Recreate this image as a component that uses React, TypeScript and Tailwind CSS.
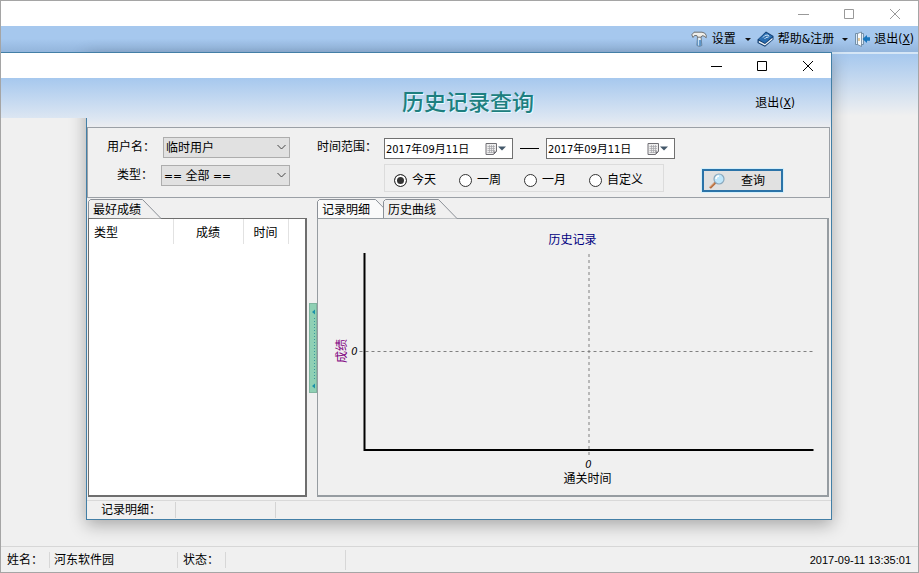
import { useState } from "react";
import type { ReactNode } from "react";

const ranges = ["今天", "一周", "一月", "自定义"];

const WindowButtons = ({ className }: { className: string }) => (
  <div className={`flex items-center ${className}`}>
    <button aria-label="最小化" className="flex h-6 w-[46px] items-center justify-center">
      <svg width="12" height="12" stroke="currentColor" fill="none">
        <path d="M1 6.5h11" />
      </svg>
    </button>
    <button aria-label="最大化" className="flex h-6 w-[46px] items-center justify-center">
      <svg width="12" height="12" stroke="currentColor" fill="none">
        <path d="M1.5 1.5h9v9h-9z" />
      </svg>
    </button>
    <button aria-label="关闭" className="flex h-6 w-[46px] items-center justify-center">
      <svg width="12" height="12" stroke="currentColor" fill="none">
        <path d="M1 1l10 10M11 1L1 11" />
      </svg>
    </button>
  </div>
);

const HammerIcon = () => (
  <svg width="16" height="16" viewBox="0 0 16 16">
    <path d="M6.500 5.500h3.500l.8 9q-2.500 1.500-4.800 0z" fill="#f1f3f4" stroke="#59646f" strokeWidth=".8" />
    <path d="M6.300 9h4l.4 5.500q-2.200 1-4.700 0z" fill="#5f97cb" />
    <path d="M7.600 6v8.500" stroke="#d5e9f8" />
    <path d="M.8 3.800L3 1.200h8q3.200.3 4.200 3v2.600q-2.200-2.600-4.200-2l-1 1.400H6.500L5.800 4.500H3.500L2 6.500z" fill="#f0efeb" stroke="#666" strokeWidth=".9" />
  </svg>
);

const BookIcon = () => (
  <svg width="17" height="16" viewBox="0 0 17 16">
    <path d="M.5 8.500L9 .5l7.500 4.500v3.500L8 15.800.5 12z" fill="#123f73" />
    <path d="M1.500 8.200L9 1.500l6.500 4L8 12z" fill="#2c6fb2" />
    <path d="M1.800 9.800L8 13l7.500-6.300v1.800L8 14.600l-6.200-3z" fill="#f3f7fa" />
    <path d="M6 6.500q1.500-3 5-2.500l1 1.500M7.500 8q1-2 4-2" fill="none" stroke="#d6e9f8" />
  </svg>
);

const DoorIcon = () => (
  <svg width="16" height="16" viewBox="0 0 16 16">
    <path d="M1.500 2.500h8v11h-8z" fill="#dceaf6" stroke="#7190ab" />
    <path d="M3.500 2.500l4-1.500v14.500l-4-2z" fill="#f6fafc" stroke="#6b8298" strokeWidth=".8" />
    <path d="M5 7v3" stroke="#d39a3a" />
    <path d="M8.500 8L13 4v2.300h3v3.400h-3V12z" fill="#1976bd" />
  </svg>
);

const SearchIcon = () => (
  <svg width="16" height="16" viewBox="0 0 16 16">
    <path d="M1 15L6.500 9.500" stroke="#b66d3d" strokeWidth="2.400" />
    <path d="M1 14.200l4.500-4.500" stroke="#e8b48f" strokeWidth=".8" />
    <circle cx="10" cy="6" r="5" fill="#bfe6fa" stroke="#8ba9be" strokeWidth="1.200" />
    <path d="M7 6q0-3 3-3" fill="none" stroke="#fff" strokeWidth="1.500" />
  </svg>
);

const CalendarIcon = () => (
  <svg width="22" height="14" viewBox="0 0 22 14">
    <path d="M1 1.500h10.500v8l-3 3H1z" fill="#eee" stroke="#706f74" />
    <path d="M2.500 4.500h7.500M2.500 6.500h7.500M2.500 8.500h7.500M2.500 10.500h5.500M4.500 3v8M6.500 3v8M8.500 3v7" stroke="#a4a4a8" strokeWidth=".7" />
    <path d="M8.500 12.500v-3h3z" fill="#706f74" />
    <path d="M13 4.500h8l-4 4z" fill="#44586a" />
  </svg>
);

const Caret = () => (
  <svg width="6" height="3" viewBox="0 0 6 3">
    <path d="M0 0h6L3 3z" fill="#111" />
  </svg>
);

const Picker = ({ id, label, options, className }: { id: string; label: string; options: string[]; className: string }) => (
  <div className="flex h-[21px] items-center justify-end">
    <label htmlFor={id} className="mr-2 pb-[2px]">
      {label}：
    </label>
    <div className={`relative ${className}`}>
      <select id={id} className="block h-[21px] w-full appearance-none border border-[#adadad] bg-[#e1e1e1] pt-px pl-[2px]">
        {options.map((option) => (
          <option key={option}>{option}</option>
        ))}
      </select>
      <svg className="pointer-events-none absolute top-[7px] right-1" width="9" height="7" fill="none" stroke="#444">
        <path d="M.5 1l4 4 4-4" />
      </svg>
    </div>
  </div>
);

const DateBox = ({ label }: { label: string }) => {
  const [value, setValue] = useState("2017年09月11日");

  return (
    <div className="flex h-[21px] w-[129px] items-center border border-[#707070] bg-white pr-[5px] pl-px">
      <input
        aria-label={label}
        className="min-w-0 flex-1 pt-[2px] text-[11px] outline-none"
        value={value}
        onChange={(e) => setValue(e.target.value)}
      />
      <button aria-label={`选择${label}`}>
        <CalendarIcon />
      </button>
    </div>
  );
};

const Tab = ({ children, width, active }: { children: ReactNode; width: number; active?: boolean }) => (
  <button role="tab" aria-selected={!!active} className="relative h-[19px] pt-[3px] pl-[5px] text-left" style={{ width }}>
    <svg className="absolute top-0 left-0 overflow-visible" width={width} height="19" stroke="#8b9097">
      <path d={`M.5 19V2.500l2-2h${width - 22}l18.500 19`} fill={active ? "#f0f0f0" : "#fafafa"} />
    </svg>
    <span className="relative">{children}</span>
  </button>
);

const HistoryChart = () => (
  <svg className="block h-full w-full" viewBox="0 0 508 276" fontSize="12">
    <text x="254" y="25" textAnchor="middle" fill="#000080">
      历史记录
    </text>
    <text transform="translate(27 132) rotate(-90)" textAnchor="middle" fill="#800080">
      成绩
    </text>
    <path d="M41 132.500h454" stroke="#808080" strokeDasharray="3 3" />
    <path d="M270.500 35v202" stroke="#808080" strokeDasharray="3 3" />
    <path d="M46 34v197h449" fill="none" stroke="#000" strokeWidth="2" />
    <g fontSize="11" fontStyle="italic">
      <text x="36" y="136" textAnchor="middle">
        0
      </text>
      <text x="270" y="249" textAnchor="middle">
        0
      </text>
    </g>
    <text x="269" y="264" textAnchor="middle">
      通关时间
    </text>
  </svg>
);

const FilterBar = () => {
  const [range, setRange] = useState("今天");

  return (
    <section className="mr-px flex h-[71px] border border-[#9ba0a6] pt-[9px]">
      <div className="flex w-[202px] flex-col gap-[7px]">
        <Picker id="user" label="用户名" options={["临时用户"]} className="w-[127px]" />
        <Picker id="kind" label="类型" options={["== 全部 =="]} className="w-[129px]" />
      </div>
      <div className="ml-[27px] flex">
        <div className="w-[67px] leading-[20px]">时间范围：</div>
        <div>
          <div className="flex items-center gap-[7px] pt-px">
            <DateBox label="开始日期" />
            <div className="h-px w-[19px] bg-black" />
            <DateBox label="结束日期" />
          </div>
          <div className="mt-[5px] flex h-[28px] w-[280px] items-center border border-[#dcdcdc] pl-[9px]">
            {ranges.map((item) => (
              <label key={item} className="flex w-[65px] shrink-0 items-center gap-[5px] pt-1">
                <input
                  type="radio"
                  name="range"
                  className="size-[13px] shrink-0 appearance-none rounded-full border border-[#333] bg-white checked:bg-[#333] checked:shadow-[inset_0_0_0_2px_white]"
                  checked={range === item}
                  onChange={() => setRange(item)}
                />
                <span className="whitespace-nowrap">{item}</span>
              </label>
            ))}
          </div>
        </div>
      </div>
      <button className="mt-8 mr-[46px] ml-auto flex h-[23px] w-[81px] items-center border-2 border-[#2b73a8] bg-[#e1e1e1] pl-[5px] outline outline-[#d3effb]">
        <SearchIcon />
        <span className="ml-4">查询</span>
      </button>
    </section>
  );
};

const HistoryWindow = () => (
  <div className="absolute -top-[2px] right-[86px] bottom-[26px] left-[85px] flex flex-col border border-[#437fa6] bg-[#f0f0f0] shadow-[0_5px_16px_rgba(0,0,0,0.3)]">
    {/* title bar and banner */}
    <div className="-mt-px -ml-[86px] border-t border-[#437fa6] bg-white">
      <WindowButtons className="h-[25px] justify-end text-black" />
    </div>
    <header className="-ml-[86px] flex h-10 items-center bg-linear-to-b from-[#a6c8ee] to-[#dce6f2] pr-9">
      <h1 className="ml-[401px] pt-[10px] text-[22px] leading-[24px] font-medium text-[#1d7f80] [text-shadow:1px_1px_0_#e6fbff]">
        历史记录查询
      </h1>
      <button className="ml-auto pt-[10px]">
        退出(<u>X</u>)
      </button>
    </header>
    <div className="h-[9px] shrink-0 bg-linear-to-b from-[#dce6f2] to-[#ecedf0]" />

    <FilterBar />

    {/* results */}
    <main className="flex min-h-0 flex-1 pt-px pl-px">
      <section className="flex w-[219px] flex-col">
        <Tab width={74} active>
          最好成绩
        </Tab>
        <div className="flex-1 border border-r-2 border-b-2 border-[#6e6e6e] bg-white">
          <table className="h-[25px] table-fixed border-collapse">
            <thead>
              <tr className="[&>th]:border-r [&>th]:border-[#e2e2e2] [&>th]:p-0 [&>th]:pt-[2px] [&>th]:font-normal">
                <th className="w-[84px] text-left">
                  <span className="pl-[5px]">类型</span>
                </th>
                <th className="w-[70px]">成绩</th>
                <th className="w-[45px]">时间</th>
              </tr>
            </thead>
          </table>
        </div>
      </section>
      <div className="flex w-[10px] items-center justify-end">
        <button aria-label="折叠" className="h-[90px] w-2 border border-[#7fb6a0] bg-[#8fd0b4]">
          <svg width="6" height="88" viewBox="0 0 6 88">
            <path d="M5 5.500v5L2 8zM5 79.500v5L2 82z" fill="#1c91a8" />
            <path d="M4.500 14v62" stroke="#39969b" strokeDasharray="1 2" />
          </svg>
        </button>
      </div>
      <section className="flex min-w-0 flex-1 flex-col pr-[2px]">
        <div className="flex" role="tablist">
          <div className="w-[66px] overflow-hidden">
            <Tab width={78}>记录明细</Tab>
          </div>
          <Tab width={75} active>
            历史曲线
          </Tab>
        </div>
        <div className="min-h-0 flex-1 border border-r-2 border-b-2 border-[#969ca1]">
          <HistoryChart />
        </div>
      </section>
    </main>

    {/* status bar */}
    <footer className="mt-[3px] flex h-[19px] items-center border-t border-[#d9d9d9]">
      <div className="w-[89px] border-r border-[#d4d4d4] pl-[14px]">记录明细：</div>
      <div className="h-4 w-[100px] border-r border-[#d4d4d4]" />
    </footer>
  </div>
);

const App = () => (
  <div
    lang="zh-CN"
    className="flex min-h-screen flex-col border border-[#a5a5a5] bg-[#f0f0f0] font-['Tahoma','DejaVu_Sans_Condensed','Noto_Sans_CJK_SC',sans-serif] text-[12px] leading-[16px] text-black"
  >
    <WindowButtons className="h-[25px] justify-end bg-white text-[#999]" />
    <nav className="flex h-[26px] items-center justify-end bg-linear-to-b from-[#a6c8ee] from-50% to-[#93b5dc] pr-1">
      <button className="flex items-center gap-[5px]">
        <HammerIcon />
        设置
        <span className="ml-1">
          <Caret />
        </span>
      </button>
      <button className="ml-[6px] flex items-center gap-1">
        <BookIcon />
        <span className="mr-1">帮助&amp;注册</span>
        <Caret />
      </button>
      <button className="ml-[6px] flex items-center gap-1">
        <DoorIcon />
        <span>
          退出(<u>X</u>)
        </span>
      </button>
    </nav>
    <div className="relative flex-1 border-t-2 border-[#d5e6f6] bg-linear-to-b from-[#a6c8ee] to-[#f0f0f0] to-[62px]">
      <HistoryWindow />
    </div>
    <footer className="flex h-[26px] items-center border-t border-[#d7d7d7]">
      <div className="w-[49px] border-r border-[#d7d7d7] pl-[6px] whitespace-nowrap">姓名：</div>
      <div className="w-[128px] border-r border-[#d7d7d7] pl-1">河东软件园</div>
      <div className="w-[48px] border-r border-[#d7d7d7] pl-[5px] whitespace-nowrap">状态：</div>
      <div className="h-5 w-[120px] border-r border-[#d7d7d7]" />
      <time className="ml-auto pr-[7px] font-['Liberation_Sans',sans-serif] text-[11px]">2017-09-11 13:35:01</time>
    </footer>
  </div>
);

export default App;
